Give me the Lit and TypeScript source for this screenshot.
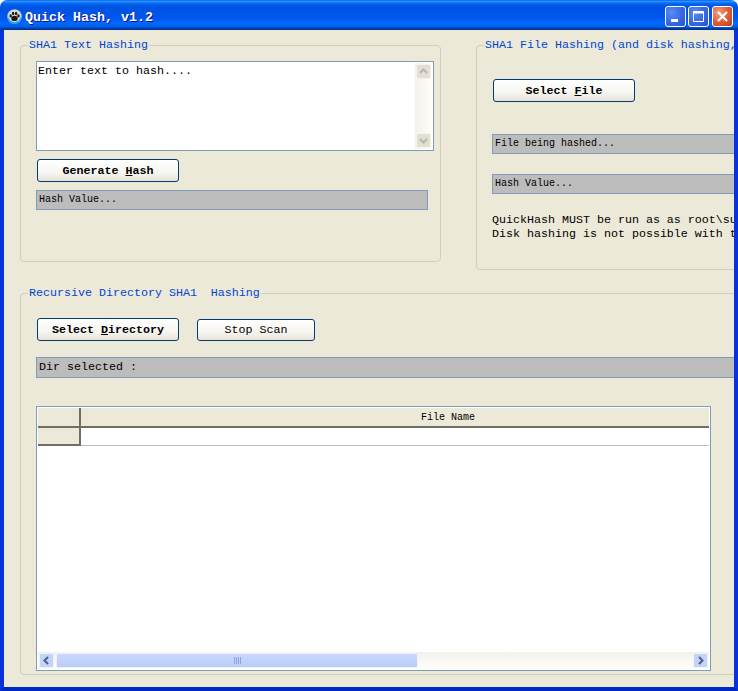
import { LitElement, html, css } from "lit";
import { customElement } from "lit/decorators.js";

const chevron = (d: string) => html`<svg width="9" height="9" viewBox="0 0 9 9"><path d=${d} fill="none" stroke="#4d6185" stroke-width="2"/></svg>`;

@customElement("app-root")
export class AppRoot extends LitElement {
  static styles = css`
    :host { display: block; width: 738px; height: 691px; overflow: hidden; background: #fff;
      font-family: "Liberation Mono", monospace; font-size: 11.67px; color: #000; }
    * { box-sizing: border-box; }
    .window { width: 738px; height: 691px; display: flex; flex-direction: column; border-radius: 7px 7px 0 0; overflow: hidden; }
    .titlebar { flex: none; height: 30px; display: flex; align-items: center; padding: 3px 5px 0 7px;
      background: linear-gradient(180deg, #0058ee 0%, #3593ff 4%, #288eff 6%, #127dff 8%, #036ffc 10%, #0262ee 14%, #0057e5 20%, #0054e3 24%, #0055eb 56%, #005bf5 66%, #026afe 76%, #0062ef 86%, #0052d6 92%, #0040ab 94%, #003092 100%); }
    .app-icon { flex: none; width: 15px; height: 15px; margin-right: 3px; }
    .title { flex: 1; padding-top: 1px; color: #fff; font-weight: bold; font-size: 13.33px; text-shadow: 1px 1px #0f1089; white-space: pre; }
    .controls { display: flex; gap: 2px; }
    .ctl { width: 21px; height: 21px; border: 1px solid #fff; border-radius: 3px; display: flex; align-items: center; justify-content: center;
      background: radial-gradient(circle at 30% 30%, #5a8cf0 0%, #3c6eea 45%, #2a50c8 100%); }
    .ctl.close { background: radial-gradient(circle at 30% 30%, #f0a080 0%, #e0603a 50%, #c23a1a 100%); margin-left: 1px; }
    .frame { flex: 1; min-height: 0; display: flex; border-style: solid; border-color: #0831d9; border-width: 0 4px 4px 4px; border-bottom-color: #0029c4; }
    .client { flex: 1; min-width: 0; background: #ece9d8; overflow: hidden; padding: 8px 0 0 16px; display: flex; flex-direction: column; gap: 16px; }
    .top { display: flex; align-items: flex-start; gap: 35px; }
    fieldset { flex: none; margin: 0; min-width: 0; border: 1px solid #d0d0bf; border-radius: 4px; padding: 9px 0 0 15px; }
    legend { color: #0046d5; line-height: 14px; padding: 0 1px; margin-left: -8px; white-space: pre; }
    .g1 { width: 421px; height: 224px; }
    .g2 { width: 400px; height: 232px; padding-top: 27px; }
    .g3 { width: 760px; height: 389px; padding-top: 18px; }
    .memo { width: 398px; height: 90px; border: 1px solid #7f9db9; background: #fff; display: flex; }
    .memo-text { flex: 1; padding: 2px 1px; line-height: 14px; }
    .vscroll { flex: none; width: 17px; margin: 1px 1px 1px 0; display: flex; flex-direction: column; justify-content: space-between;
      background: linear-gradient(90deg, #f3f1ec, #fefefb); }
    .sbtn { width: 15px; height: 15px; margin: 1px; border-radius: 2px; border: 1px solid #f4f3ee; background: #e3e0d2; display: flex; align-items: center; justify-content: center; }
    .sbtn svg path { stroke: #b8b6a8; }
    button { display: block; font: inherit; color: #000; padding: 0; width: 142px; height: 23px; border: 1px solid #003c74; border-radius: 3px;
      background: linear-gradient(180deg, #fff 0%, #f6f5f0 60%, #e6e3d8 100%); }
    button.strong { font-weight: bold; }
    .b-gen { margin: 8px 0 0 1px; }
    .b-file { margin-left: 1px; }
    .bar { border: 1px solid #7f9db9; background: #bcbcbc; height: 20px; padding: 0 0 1px 2px; display: flex; align-items: center; font-size: 10px; white-space: pre; }
    .bar.large { font-size: 11.67px; height: 21px; width: 710px; margin-top: 16px; }
    .hash1 { width: 392px; margin-top: 8px; }
    .wide { width: 380px; }
    .m32 { margin-top: 32px; }
    .m20 { margin-top: 20px; }
    .notice { margin-top: 19px; line-height: 14px; white-space: pre; }
    .btns { display: flex; align-items: flex-end; gap: 18px; margin-left: 1px; }
    .b-stop { width: 118px; height: 22px; }
    .grid { margin-top: 28px; width: 675px; height: 265px; border: 1px solid #7f9db9; background: #fff; padding: 1px; display: flex; flex-direction: column; }
    .rows { flex: 1; display: grid; grid-template-columns: 43px 1fr; grid-auto-rows: max-content; }
    .fixed { background: #ece9d8; border-right: 2px solid #716f64; border-bottom: 2px solid #716f64; }
    .head { height: 20px; padding: 0 0 0 106px; background: #ece9d8; border-bottom: 2px solid #716f64; text-align: center; font-size: 10px; line-height: 19px; }
    .row-fixed { height: 18px; }
    .cell { height: 18px; border-bottom: 1px solid #c0c0c0; }
    .hscroll { flex: none; height: 17px; display: flex; align-items: center; gap: 2px; padding: 0 1px; background: linear-gradient(180deg, #f3f1ec, #fefefb); }
    .hbtn { width: 15px; height: 15px; border: 1px solid #eef2fd; border-radius: 2px; background: #c3d4fb; display: flex; align-items: center; justify-content: center; }
    .thumb { width: 362px; height: 15px; border-radius: 2px; border: 1px solid #eef2fd; background: linear-gradient(180deg, #c9d8fc, #b8cdf9); display: flex; align-items: center; justify-content: center; }
    .grip { display: flex; gap: 1px; }
    .grip span { width: 1px; height: 7px; background: #8aa4e0; }
    .spacer { flex: 1; }
  `;

  render() {
    return html`
      <div class="window">
        <header class="titlebar">
          <svg class="app-icon" viewBox="0 0 16 16">
            <circle cx="8" cy="8" r="7.8" fill="#9fc4d8"/>
            <path d="M1 9a7 7 0 0 0 14 0z" fill="#2aa0d8"/>
            <circle cx="8" cy="7.4" r="6.6" fill="#d8dfe2"/>
            <ellipse cx="8" cy="10" rx="3.4" ry="2.8" fill="#1a1a1a"/>
            <ellipse cx="3.9" cy="7.4" rx="1.3" ry="1.7" fill="#1a1a1a"/>
            <ellipse cx="6.5" cy="4.8" rx="1.3" ry="1.8" fill="#1a1a1a"/>
            <ellipse cx="9.7" cy="4.8" rx="1.3" ry="1.8" fill="#1a1a1a"/>
            <ellipse cx="12.2" cy="7.4" rx="1.3" ry="1.7" fill="#1a1a1a"/>
          </svg>
          <div class="title">Quick Hash, v1.2</div>
          <div class="controls">
            <div class="ctl"><svg width="15" height="15" viewBox="0 0 15 15"><rect x="3" y="10" width="7" height="3" fill="#fff"/></svg></div>
            <div class="ctl"><svg width="15" height="15" viewBox="0 0 15 15"><path d="M2.5 2.5h10v10h-10z" fill="none" stroke="#fff"/><rect x="2.5" y="2.5" width="10" height="2" fill="#fff"/></svg></div>
            <div class="ctl close"><svg width="15" height="15" viewBox="0 0 15 15"><path d="M3 3l9 9M12 3l-9 9" stroke="#fff" stroke-width="2.2" fill="none"/></svg></div>
          </div>
        </header>
        <div class="frame">
          <main class="client">
            <div class="top">
              <fieldset class="g1">
                <legend>SHA1 Text Hashing</legend>
                <div class="memo">
                  <div class="memo-text">Enter text to hash....</div>
                  <div class="vscroll">
                    <div class="sbtn">${chevron("M1 6l3.5-3.5L8 6")}</div>
                    <div class="sbtn">${chevron("M1 3l3.5 3.5L8 3")}</div>
                  </div>
                </div>
                <button class="strong b-gen">Generate <u>H</u>ash</button>
                <div class="bar hash1">Hash Value...</div>
              </fieldset>
              <fieldset class="g2">
                <legend>SHA1 File Hashing (and disk hashing,</legend>
                <button class="strong b-file">Select <u>F</u>ile</button>
                <div class="bar wide m32">File being hashed...</div>
                <div class="bar wide m20">Hash Value...</div>
                <div class="notice">QuickHash MUST be run as as root\\su
Disk hashing is not possible with t</div>
              </fieldset>
            </div>
            <fieldset class="g3">
              <legend>Recursive Directory SHA1  Hashing</legend>
              <div class="btns">
                <button class="strong">Select <u>D</u>irectory</button>
                <button class="b-stop">Stop Scan</button>
              </div>
              <div class="bar large">Dir selected :</div>
              <div class="grid">
                <div class="rows">
                  <div class="fixed"></div>
                  <div class="head">File Name</div>
                  <div class="fixed row-fixed"></div>
                  <div class="cell"></div>
                </div>
                <div class="hscroll">
                  <div class="hbtn">${chevron("M6 1L2.5 4.5L6 8")}</div>
                  <div class="thumb"><div class="grip"><span></span><span></span><span></span><span></span></div></div>
                  <div class="spacer"></div>
                  <div class="hbtn">${chevron("M3 1l3.5 3.5L3 8")}</div>
                </div>
              </div>
            </fieldset>
          </main>
        </div>
      </div>
    `;
  }
}
